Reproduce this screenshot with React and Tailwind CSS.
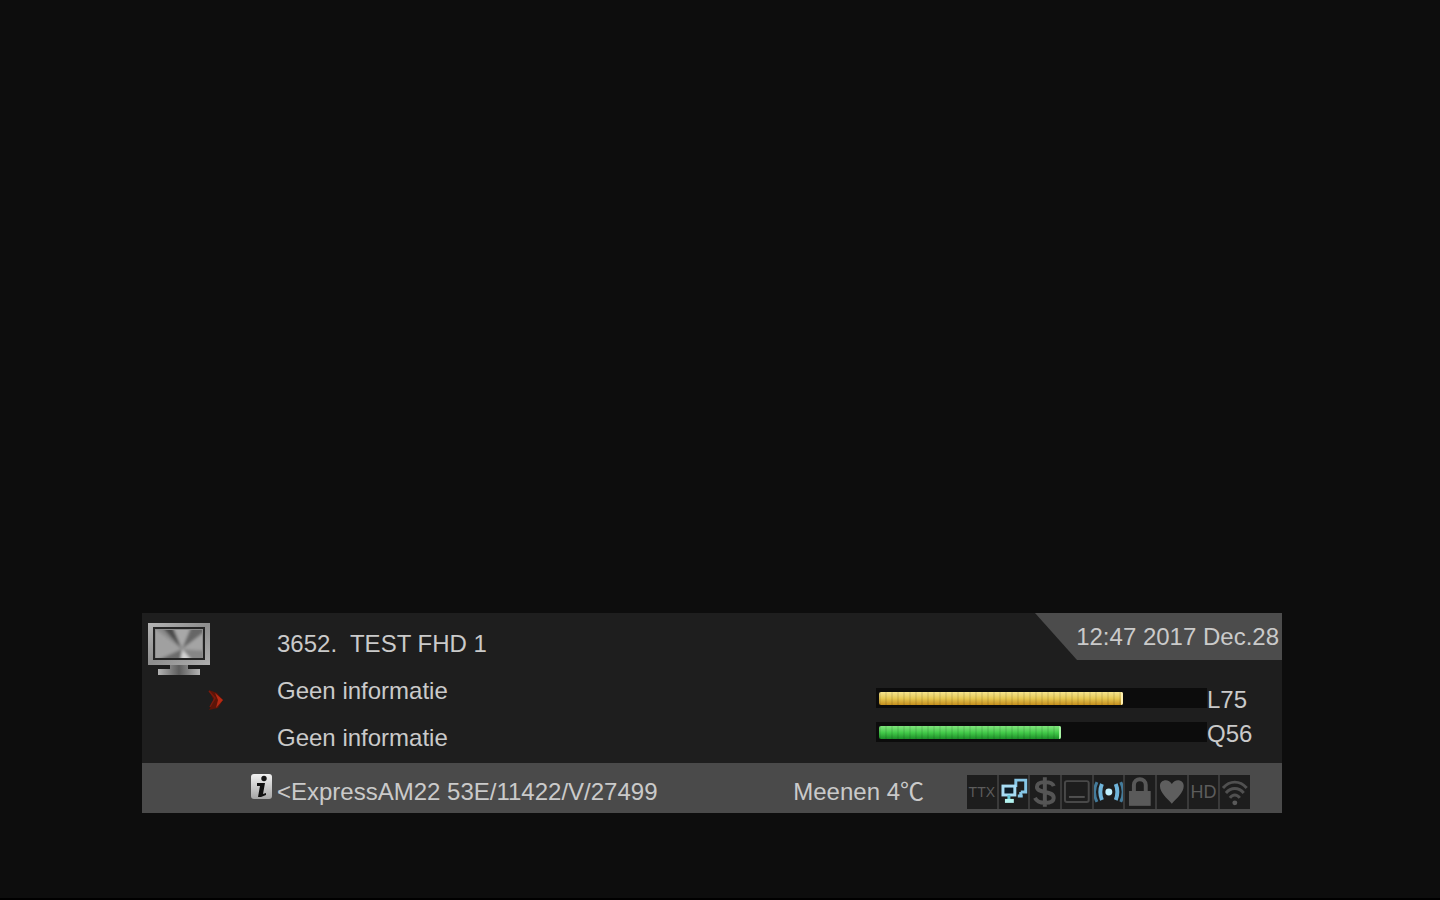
const meters = [
  {
    label: "L75",
    name: "Level",
    value: 75,
    fill: "bg-linear-to-b from-[#f6e58e] via-[#e6c750] to-[#c48f1c]",
    tip: "bg-[#fff0b0]"
  },
  {
    label: "Q56",
    name: "Quality",
    value: 56,
    fill: "bg-linear-to-b from-[#7fe57c] via-[#43cb4a] to-[#1c8f28]",
    tip: "bg-[#a8f5a4]"
  }
];

const MonitorIcon = () => (
  <svg width="62" height="52" viewBox="0 0 62 52" aria-hidden="true">
    <defs>
      <linearGradient id="frame" x1="0" y1="0" x2="1" y2="1">
        <stop offset="0" stopColor="#b4b4b4" />
        <stop offset="0.5" stopColor="#8e8e8e" />
        <stop offset="1" stopColor="#b0b0b0" />
      </linearGradient>
      <linearGradient id="stand" x1="0" x2="1">
        <stop offset="0" stopColor="#b4b4b4" />
        <stop offset="0.5" stopColor="#5c5c5c" />
        <stop offset="1" stopColor="#b4b4b4" />
      </linearGradient>
      <filter id="sheen" x="-0.1" y="-0.1" width="1.2" height="1.2">
        <feGaussianBlur stdDeviation="1.8" />
      </filter>
      <clipPath id="screen">
        <rect x="8" y="7" width="46" height="28" />
      </clipPath>
    </defs>
    <path d="M22 40h18v6h12v6H10v-6h12z" fill="url(#stand)" />
    <rect x="0" y="0" width="62" height="42" fill="url(#frame)" />
    <rect x="5" y="4" width="52" height="33" fill="#242424" />
    <rect x="7" y="6" width="48" height="29" fill="#8c8c8c" />
    <g clipPath="url(#screen)">
      <g filter="url(#sheen)">
        <path d="M34 26L2 2v38z" fill="#a0a0a0" />
        <path d="M34 26L2 2h14z" fill="#8a8a8a" />
        <path d="M34 26L12 2h12z" fill="#4c4c4c" />
        <path d="M34 26L24 2h22z" fill="#a8a8a8" />
        <path d="M34 26L44 2h16v6z" fill="#666" />
        <path d="M34 26L60 6v24z" fill="#a4a4a4" />
        <path d="M34 26L60 28v14H46z" fill="#868686" />
        <path d="M34 26L46 40H32z" fill="#d4d4d4" />
        <path d="M34 26L32 40H4z" fill="#6a6a6a" />
      </g>
    </g>
  </svg>
);

const ArrowIcon = () => (
  <svg width="18" height="22" viewBox="0 0 18 22" aria-hidden="true">
    <path d="M2 1l8 3 6 7-5 8-9 2 5-9z" fill="#5c1408" />
    <path d="M8 4l8 7-7 8 2-8z" fill="#b62a14" />
    <path d="M2 2l6 7-5 9" fill="none" stroke="#7c1a0c" strokeWidth="1.5" />
  </svg>
);

const InfoIcon = () => (
  <svg width="21" height="25" viewBox="0 0 21 25" aria-hidden="true">
    <defs>
      <linearGradient id="info" x1="0" x2="0" y1="0" y2="1">
        <stop offset="0" stopColor="#f2f2f2" />
        <stop offset="1" stopColor="#a6a6a6" />
      </linearGradient>
    </defs>
    <rect width="21" height="25" rx="3" fill="url(#info)" />
    <circle cx="13" cy="4.5" r="2.7" fill="#151515" />
    <path d="M6 9h8l-2 11 3-1v2l-5 2H7l2-11H6z" fill="#101010" />
  </svg>
);

const Glyph = ({ children }) => (
  <svg className="h-full w-full" viewBox="0 0 30 34" fill="none" aria-hidden="true">
    {children}
  </svg>
);

const status = [
  { name: "Teletext", icon: <span className="text-sm">TTX</span> },
  {
    name: "Network",
    icon: (
      <Glyph>
        <path d="M17 12V5h10v12h-5" stroke="#86c6e6" strokeWidth="3" />
        <path d="M19 21h5M22 17v4" stroke="#86c6e6" strokeWidth="3" />
        <rect x="4" y="11" width="12" height="9" fill="#0c1c28" stroke="#a8dcf4" strokeWidth="3" />
        <path d="M10 20v5" stroke="#66c8d8" strokeWidth="3" />
        <path d="M6 26h9" stroke="#b4f4f0" strokeWidth="4" />
      </Glyph>
    )
  },
  {
    name: "Scrambled",
    icon: (
      <Glyph>
        <path d="M24 11c-1-3-4-4-9-4s-8 1-8 5c0 3 3 4 8 5s9 2 9 6-4 5-9 5-8-1-10-5M15 2v30" stroke="#555" strokeWidth="4" />
      </Glyph>
    )
  },
  {
    name: "Subtitle",
    icon: (
      <Glyph>
        <rect x="3" y="6" width="24" height="21" rx="2" stroke="#484848" strokeWidth="2" />
        <path d="M7 22h16" stroke="#505050" strokeWidth="2" />
      </Glyph>
    )
  },
  {
    name: "Signal",
    icon: (
      <Glyph>
        <circle cx="15" cy="17" r="3.5" fill="#c0f0ff" />
        <path d="M8 9c-2 5-2 11 0 16M22 9c2 5 2 11 0 16" stroke="#6fb4da" strokeWidth="4" />
        <path d="M3 7c-3 6-3 14 0 20M27 7c3 6 3 14 0 20" stroke="#447c9c" strokeWidth="3" />
      </Glyph>
    )
  },
  {
    name: "Locked",
    icon: (
      <Glyph>
        <path d="M9 17v-7c0-8 12-8 12 0v7" stroke="#585858" strokeWidth="4" />
        <rect x="4" y="16" width="22" height="15" fill="#5a5a5a" />
      </Glyph>
    )
  },
  {
    name: "Favourite",
    icon: (
      <Glyph>
        <path d="M15 29C10 23 3 18 3 11c0-7 9-8 12-2 3-6 12-5 12 2 0 7-7 12-12 18z" fill="#5e5e5e" />
      </Glyph>
    )
  },
  { name: "High definition", icon: <span className="text-lg">HD</span> },
  {
    name: "Wi-Fi",
    icon: (
      <Glyph>
        <path d="M3 13c7-8 17-8 24 0M6 18c5-6 13-6 18 0M10 23c3-4 7-4 10 0" stroke="#505050" strokeWidth="3" />
        <circle cx="15" cy="28" r="2.5" fill="#5a5a5a" />
      </Glyph>
    )
  }
];

const Meter = ({ meter }) => (
  <div className="flex h-[34px] items-start">
    <div
      role="meter"
      aria-label={meter.name}
      aria-valuenow={meter.value}
      aria-valuemin={0}
      aria-valuemax={100}
      className="mt-1 h-5 flex-1 bg-[#0c0c0c] px-[3px] py-1"
    >
      <div
        className={`flex h-[13px] justify-end overflow-hidden rounded-xs ${meter.fill}`}
        style={{ width: `${meter.value}%` }}
      >
        <div className="flex-1 bg-[repeating-linear-gradient(90deg,#00000014_0px,#00000014_2px,transparent_2px,transparent_6px)]" />
        <div className={`w-[2px] ${meter.tip}`} />
      </div>
    </div>
    <span className="w-[75px] leading-[32px]">{meter.label}</span>
  </div>
);

const App = () => {
  return (
    <main className="flex min-h-screen items-end border-b-2 border-black bg-[#0d0d0d] pr-[158px] pb-[85px] pl-[142px] font-['Liberation_Sans','Noto_Sans_CJK_SC',sans-serif] text-2xl text-[#cacaca]">
      <section className="w-full bg-[#1e1e1e]">
        <div className="flex min-h-[150px]">
          <div className="flex w-[135px] flex-col pt-[10px] pl-[6px]">
            <MonitorIcon />
            <div className="mt-[14px] pl-[59px]">
              <ArrowIcon />
            </div>
          </div>

          <div className="flex-1 pt-[7px] leading-[47px]">
            <h1 className="whitespace-pre">3652.  TEST FHD 1</h1>
            <p>Geen informatie</p>
            <p>Geen informatie</p>
          </div>

          <div className="flex w-[406px] flex-col">
            <time className="h-[47px] w-[247px] self-end bg-[#4c4c4c] pr-[3px] text-right leading-[47px] whitespace-nowrap [clip-path:polygon(0_0,100%_0,100%_100%,42px_100%)]">
              12:47 2017 Dec.28
            </time>
            <div className="mt-6">
              {meters.map((meter) => (
                <Meter key={meter.label} meter={meter} />
              ))}
            </div>
          </div>
        </div>

        <footer className="flex h-[50px] items-start bg-[#4a4a4a] pr-8">
          <div className="flex w-[135px] justify-end pt-[11px] pr-[5px]">
            <InfoIcon />
          </div>
          <p className="pt-2 leading-[42px]">&lt;ExpressAM22 53E/11422/V/27499</p>
          <p className="mr-[43px] ml-auto pt-2 leading-[42px]">Meenen 4℃</p>
          <ul className="mt-3 grid w-[283px] grid-cols-9 gap-[2px] bg-[#3a3a3a]">
            {status.map((item) => (
              <li
                key={item.name}
                aria-label={item.name}
                className="flex h-[34px] items-center justify-center bg-[#1d1d1d] text-[#5c5c5c]"
              >
                {item.icon}
              </li>
            ))}
          </ul>
        </footer>
      </section>
    </main>
  );
};

export default App;
